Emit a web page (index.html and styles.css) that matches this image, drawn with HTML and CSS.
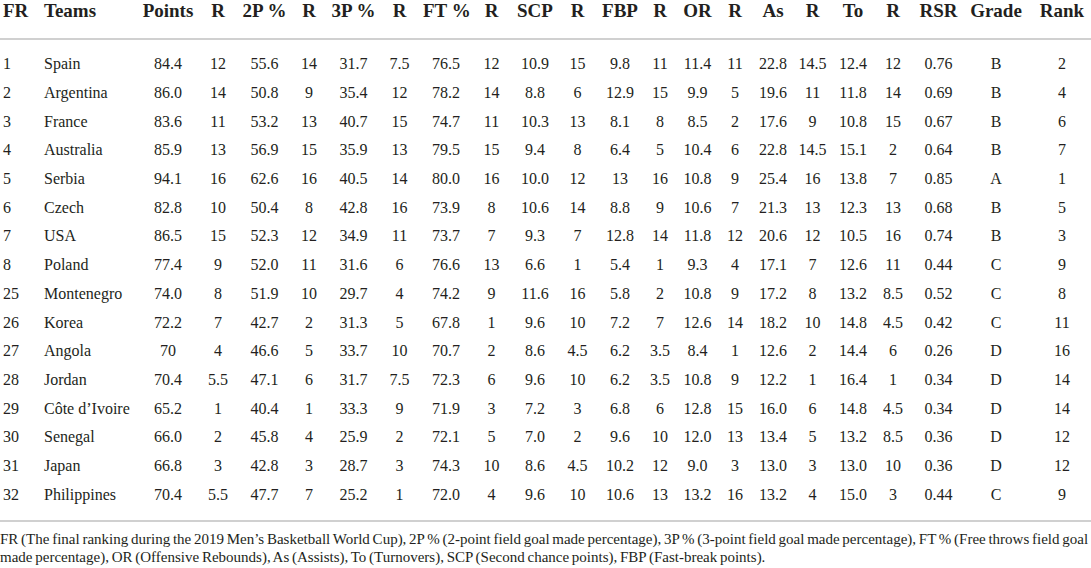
FILE: index.html
```html
<!DOCTYPE html>
<html lang="en">
<head>
    <meta charset="UTF-8">
    <meta name="viewport" content="width=device-width, initial-scale=1.0">
    <title>Team ranking table</title>
    <link rel="stylesheet" href="styles.css">
</head>
<body>
    <div class="table-wrap">
        <table class="stats">
            <colgroup>
                <col style="width:40px"><col style="width:102px"><col style="width:52px"><col style="width:48px">
                <col style="width:45px"><col style="width:44px"><col style="width:45px"><col style="width:47px">
                <col style="width:46px"><col style="width:45px"><col style="width:42px"><col style="width:43px">
                <col style="width:42px"><col style="width:38px"><col style="width:37px"><col style="width:38px">
                <col style="width:38px"><col style="width:41px"><col style="width:40px"><col style="width:40px">
                <col style="width:51px"><col style="width:64px"><col style="width:63px">
            </colgroup>
            <thead>
                <tr>
                    <th class="left fr">FR</th>
                    <th class="left team">Teams</th>
                    <th>Points</th><th>R</th>
                    <th>2P %</th><th>R</th>
                    <th>3P %</th><th>R</th>
                    <th>FT %</th><th>R</th>
                    <th>SCP</th><th>R</th>
                    <th>FBP</th><th>R</th>
                    <th>OR</th><th>R</th>
                    <th>As</th><th>R</th>
                    <th>To</th><th>R</th>
                    <th>RSR</th><th>Grade</th><th class="rank">Rank</th>
                </tr>
            </thead>
            <tbody id="rows"></tbody>
        </table>
    </div>
    <p class="note">FR (The final ranking during the 2019 Men’s Basketball World Cup), 2P % (2-point field goal made percentage), 3P % (3-point field goal made percentage), FT % (Free throws field goal<br>made percentage), OR (Offensive Rebounds), As (Assists), To (Turnovers), SCP (Second chance points), FBP (Fast-break points).</p>

    <script>
        const data = [
            ["1", "Spain", "84.4", "12", "55.6", "14", "31.7", "7.5", "76.5", "12", "10.9", "15", "9.8", "11", "11.4", "11", "22.8", "14.5", "12.4", "12", "0.76", "B", "2"],
            ["2", "Argentina", "86.0", "14", "50.8", "9", "35.4", "12", "78.2", "14", "8.8", "6", "12.9", "15", "9.9", "5", "19.6", "11", "11.8", "14", "0.69", "B", "4"],
            ["3", "France", "83.6", "11", "53.2", "13", "40.7", "15", "74.7", "11", "10.3", "13", "8.1", "8", "8.5", "2", "17.6", "9", "10.8", "15", "0.67", "B", "6"],
            ["4", "Australia", "85.9", "13", "56.9", "15", "35.9", "13", "79.5", "15", "9.4", "8", "6.4", "5", "10.4", "6", "22.8", "14.5", "15.1", "2", "0.64", "B", "7"],
            ["5", "Serbia", "94.1", "16", "62.6", "16", "40.5", "14", "80.0", "16", "10.0", "12", "13", "16", "10.8", "9", "25.4", "16", "13.8", "7", "0.85", "A", "1"],
            ["6", "Czech", "82.8", "10", "50.4", "8", "42.8", "16", "73.9", "8", "10.6", "14", "8.8", "9", "10.6", "7", "21.3", "13", "12.3", "13", "0.68", "B", "5"],
            ["7", "USA", "86.5", "15", "52.3", "12", "34.9", "11", "73.7", "7", "9.3", "7", "12.8", "14", "11.8", "12", "20.6", "12", "10.5", "16", "0.74", "B", "3"],
            ["8", "Poland", "77.4", "9", "52.0", "11", "31.6", "6", "76.6", "13", "6.6", "1", "5.4", "1", "9.3", "4", "17.1", "7", "12.6", "11", "0.44", "C", "9"],
            ["25", "Montenegro", "74.0", "8", "51.9", "10", "29.7", "4", "74.2", "9", "11.6", "16", "5.8", "2", "10.8", "9", "17.2", "8", "13.2", "8.5", "0.52", "C", "8"],
            ["26", "Korea", "72.2", "7", "42.7", "2", "31.3", "5", "67.8", "1", "9.6", "10", "7.2", "7", "12.6", "14", "18.2", "10", "14.8", "4.5", "0.42", "C", "11"],
            ["27", "Angola", "70", "4", "46.6", "5", "33.7", "10", "70.7", "2", "8.6", "4.5", "6.2", "3.5", "8.4", "1", "12.6", "2", "14.4", "6", "0.26", "D", "16"],
            ["28", "Jordan", "70.4", "5.5", "47.1", "6", "31.7", "7.5", "72.3", "6", "9.6", "10", "6.2", "3.5", "10.8", "9", "12.2", "1", "16.4", "1", "0.34", "D", "14"],
            ["29", "Côte d’Ivoire", "65.2", "1", "40.4", "1", "33.3", "9", "71.9", "3", "7.2", "3", "6.8", "6", "12.8", "15", "16.0", "6", "14.8", "4.5", "0.34", "D", "14"],
            ["30", "Senegal", "66.0", "2", "45.8", "4", "25.9", "2", "72.1", "5", "7.0", "2", "9.6", "10", "12.0", "13", "13.4", "5", "13.2", "8.5", "0.36", "D", "12"],
            ["31", "Japan", "66.8", "3", "42.8", "3", "28.7", "3", "74.3", "10", "8.6", "4.5", "10.2", "12", "9.0", "3", "13.0", "3", "13.0", "10", "0.36", "D", "12"],
            ["32", "Philippines", "70.4", "5.5", "47.7", "7", "25.2", "1", "72.0", "4", "9.6", "10", "10.6", "13", "13.2", "16", "13.2", "4", "15.0", "3", "0.44", "C", "9"]
        ];

        const body = document.getElementById("rows");
        data.forEach(function (row) {
            let tr = document.createElement("tr");
            row.forEach(function (val, i) {
                let td = document.createElement("td");
                td.textContent = val;
                if (i === 0) td.className = "left fr";
                else if (i === 1) td.className = "left team";
                else if (i === 22) td.className = "rank";
                tr.appendChild(td);
            });
            body.appendChild(tr);
        });
    </script>
</body>
</html>
```

FILE: styles.css
```css
body {
    margin: 0;
    padding: 0;
    background: #ffffff;
    color: #231f20;
    font-family: "Liberation Serif", "Times New Roman", serif;
}
.table-wrap {
    width: 1091px;
}
.stats {
    width: 1091px;
    table-layout: fixed;
    border-collapse: collapse;
}
.stats th,
.stats td {
    padding: 0;
    text-align: center;
    white-space: nowrap;
}
.stats th {
    font-size: 19px;
    font-weight: bold;
    line-height: 22px;
    padding-bottom: 16px;
    border-bottom: 2px solid #d0d0d0;
}
.stats td {
    font-size: 16px;
    height: 28.7px;
    line-height: 18px;
}
.stats tbody tr:first-child td {
    padding-top: 10px;
}
.stats tbody tr:last-child td {
    padding-bottom: 11px;
    border-bottom: 2px solid #d0d0d0;
}
.stats .left {
    text-align: left;
}
.stats .fr {
    padding-left: 3px;
}
.stats .team {
    padding-left: 4px;
}
.stats .rank {
    padding-left: 5px;
}
.note {
    margin: 8px 0 0 0;
    font-size: 15px;
    line-height: 18px;
    word-spacing: -1px;
    white-space: nowrap;
    width: 1091px;
}
```
